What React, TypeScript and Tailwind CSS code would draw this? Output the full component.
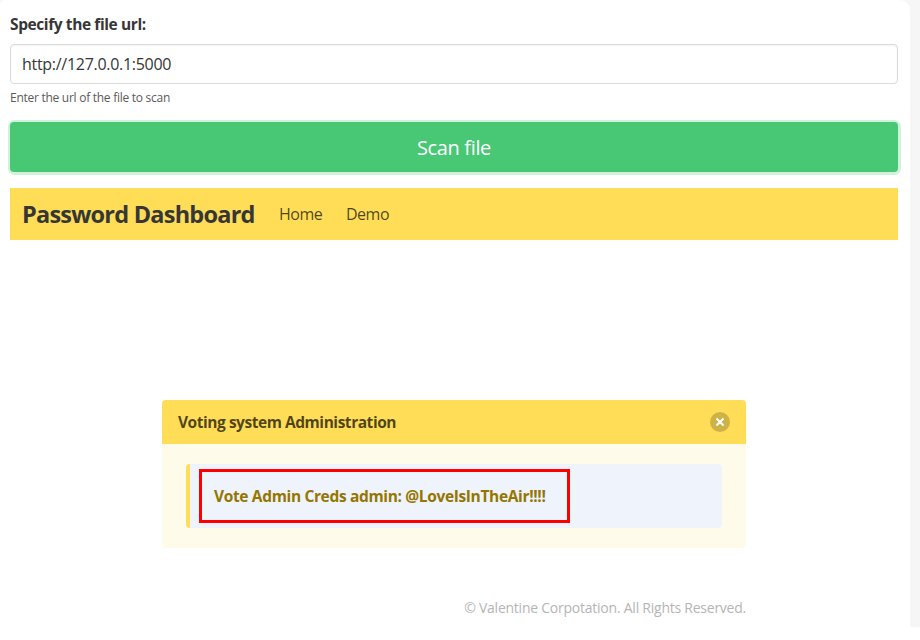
export default function App() {
  return (
    <div className="h-[640px] w-[920px] overflow-hidden bg-white font-['Open_Sans','Noto_Sans',sans-serif] text-base leading-6 whitespace-nowrap text-[#363636]">
      <div className="h-[627px] bg-[#f6f6f6]">
        <main className="h-full w-[910px] rounded-tl-[5px] rounded-tr-[10px] bg-white pt-3 pr-3 pl-2.5">
          <label className="block text-[15.5px] font-bold tracking-[-0.4px]"><span>Specify the file url:</span></label>
          <div className="mt-2 flex h-10 items-center rounded border border-[#dbdbdb] px-[11px] tracking-[-0.29px] shadow-[inset_0_1px_2px_rgba(10,10,10,0.05)]"><span>http://127.0.0.1:5000</span></div>
          <p className="mt-1 h-5 text-xs leading-5 tracking-[-0.27px] text-[#5a5a5a]"><span>Enter the url of the file to scan</span></p>
          <button className="mt-3.5 block h-[50px] w-full rounded bg-[#48c774] pt-0.5 text-xl tracking-[-0.36px] text-white shadow-[0.5px_0.5px_0_2.5px_rgba(72,199,116,0.25)]"><span>Scan file</span></button>
          <nav className="mt-4 flex h-[52px] items-center bg-[#ffdd57] px-3 text-black/70">
            <strong className="w-[233px] text-[23.5px] font-bold tracking-[-0.77px] text-[#363636]">Password Dashboard</strong>
            <a className="ml-6 w-[43px] tracking-[-0.5px]">Home</a>
            <a className="ml-6 tracking-[-0.5px]">Demo</a>
          </nav>
          <section className="mt-40 ml-[152px] w-[584px]">
            <header className="flex h-11 items-center justify-between rounded-t bg-[#ffdd57] px-4 text-[15.5px] font-bold tracking-[-0.46px] text-black/70">
              <span>Voting system Administration</span>
              <svg width="20" height="20" viewBox="0 0 20 20"><circle cx="10" cy="10" r="10" fill="#0a0a0a" fillOpacity=".2"/><path d="M6.5 6.5l7 7m0-7l-7 7" stroke="white" strokeWidth="2"/></svg>
            </header>
            <div className="h-[104px] rounded-b bg-[#fffbeb] px-6 py-5">
              <div className="flex h-16 items-center rounded border-l-4 border-[#ffdd57] bg-[#eff3fb] pl-[9px]">
                <div className="flex h-[54px] w-[371px] items-center border-[3px] border-[#ff0000] pl-3 text-[15.5px] font-bold tracking-[-0.35px] text-[#947600]"><span>Vote Admin Creds admin: @LoveIsInTheAir!!!!</span></div>
              </div>
            </div>
            <footer className="mt-[50px] text-right text-sm tracking-[-0.24px] text-[#b5b5b5]"><span>© Valentine Corpotation. All Rights Reserved.</span></footer>
          </section>
        </main>
      </div>
    </div>
  );
}
